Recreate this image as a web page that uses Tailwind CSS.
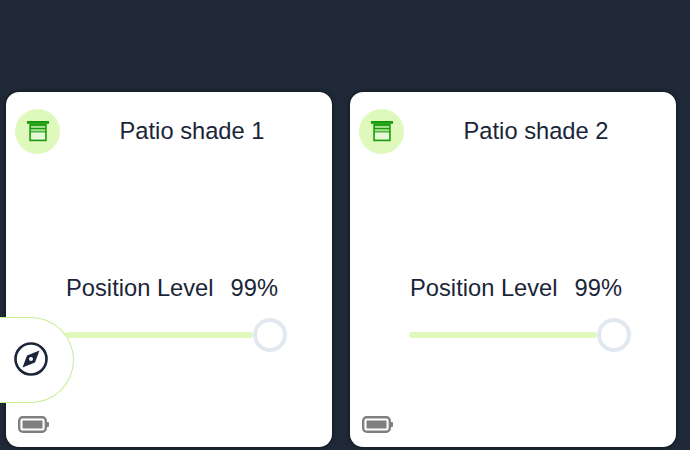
<!DOCTYPE html>
<html lang="en">
  <head>
    <meta charset="UTF-8" />
    <title>Patio shades</title>
    <script src="https://cdn.jsdelivr.net/npm/@tailwindcss/browser@4"></script>
  </head>
  <body class="relative w-[690px] h-[450px] overflow-hidden bg-[#1f2937] font-['Liberation_Sans',Arial,sans-serif] text-[#1a2538]">
    <div class="flex gap-[18px] pl-[6px] pt-[92px]">
      <!-- card 1 -->
      <div class="w-[326px] h-[355px] flex flex-col rounded-[13px] bg-white px-[9px] pt-[17px] pb-[13px] shadow-[0_0_4px_rgba(0,0,0,0.6)]">
        <div class="flex items-center">
          <div class="w-[45px] h-[45px] rounded-full bg-[#dff9bd] flex items-center justify-center">
            <svg width="22" height="21" viewBox="0 0 22 21">
              <rect x="0" y="0" width="22" height="2.8" fill="#169c0a" />
              <rect x="2.3" y="2.8" width="17.4" height="17.4" fill="#169c0a" />
              <rect x="3.9" y="4.8" width="14.2" height="2.2" fill="#9fd98a" />
              <rect x="3.9" y="8.2" width="14.2" height="2.2" fill="#a9de94" />
              <rect x="3.9" y="11.4" width="14.2" height="7.2" fill="#e8f9d8" />
            </svg>
          </div>
          <div class="flex-1 text-center text-[23.7px] leading-[28px] pb-[2px] pl-[1px]">Patio shade 1</div>
        </div>
        <div class="mt-[120px] flex justify-center gap-[17px] text-[23.7px] leading-[28px] pl-[6px]">
          <span>Position Level</span><span>99%</span>
        </div>
        <div class="mt-[16px] ml-[50px] mr-[36px] flex items-center">
          <div class="flex-1 h-[6px] rounded-full bg-[#dff9bd]"></div>
          <div class="w-[34px] h-[34px] rounded-full border-[4px] border-[#e2e8f0] bg-white"></div>
        </div>
        <div class="mt-auto pl-[3px] h-[18px]">
          <svg width="32" height="18" viewBox="0 0 32 18" fill="none">
            <rect x="1.2" y="1.2" width="26.6" height="14.6" rx="3.5" stroke="#808080" stroke-width="2.4" />
            <rect x="4.5" y="4.5" width="20" height="8" fill="#808080" />
            <path d="M29 6h1a1 1 0 0 1 1 1v3a1 1 0 0 1-1 1h-1z" fill="#808080" />
          </svg>
        </div>
      </div>
      <!-- card 2 -->
      <div class="w-[326px] h-[355px] flex flex-col rounded-[13px] bg-white px-[9px] pt-[17px] pb-[13px] shadow-[0_0_4px_rgba(0,0,0,0.6)]">
        <div class="flex items-center">
          <div class="w-[45px] h-[45px] rounded-full bg-[#dff9bd] flex items-center justify-center">
            <svg width="22" height="21" viewBox="0 0 22 21">
              <rect x="0" y="0" width="22" height="2.8" fill="#169c0a" />
              <rect x="2.3" y="2.8" width="17.4" height="17.4" fill="#169c0a" />
              <rect x="3.9" y="4.8" width="14.2" height="2.2" fill="#9fd98a" />
              <rect x="3.9" y="8.2" width="14.2" height="2.2" fill="#a9de94" />
              <rect x="3.9" y="11.4" width="14.2" height="7.2" fill="#e8f9d8" />
            </svg>
          </div>
          <div class="flex-1 text-center text-[23.7px] leading-[28px] pb-[2px] pl-[1px]">Patio shade 2</div>
        </div>
        <div class="mt-[120px] flex justify-center gap-[17px] text-[23.7px] leading-[28px] pl-[6px]">
          <span>Position Level</span><span>99%</span>
        </div>
        <div class="mt-[16px] ml-[50px] mr-[36px] flex items-center">
          <div class="flex-1 h-[6px] rounded-full bg-[#dff9bd]"></div>
          <div class="w-[34px] h-[34px] rounded-full border-[4px] border-[#e2e8f0] bg-white"></div>
        </div>
        <div class="mt-auto pl-[3px] h-[18px]">
          <svg width="32" height="18" viewBox="0 0 32 18" fill="none">
            <rect x="1.2" y="1.2" width="26.6" height="14.6" rx="3.5" stroke="#808080" stroke-width="2.4" />
            <rect x="4.5" y="4.5" width="20" height="8" fill="#808080" />
            <path d="M29 6h1a1 1 0 0 1 1 1v3a1 1 0 0 1-1 1h-1z" fill="#808080" />
          </svg>
        </div>
      </div>
    </div>
    <!-- nav tab over the first card -->
    <div class="absolute left-0 top-[317px] w-[74px] h-[86px] rounded-r-[43px] border border-l-0 border-[#c5ee95] bg-white flex items-center pl-[14px] pb-[2px]">
      <svg width="34" height="34" viewBox="0 0 34 34" fill="none">
        <circle cx="17" cy="17" r="15.5" stroke="#1a2538" stroke-width="2.6" />
        <path fill-rule="evenodd" clip-rule="evenodd" d="M25.5 8.5 L21 20.6 L8.5 25.5 L13 13.4 Z M17 15a2 2 0 1 0 0 4a2 2 0 1 0 0-4z" fill="#1a2538" />
      </svg>
    </div>
  </body>
</html>
